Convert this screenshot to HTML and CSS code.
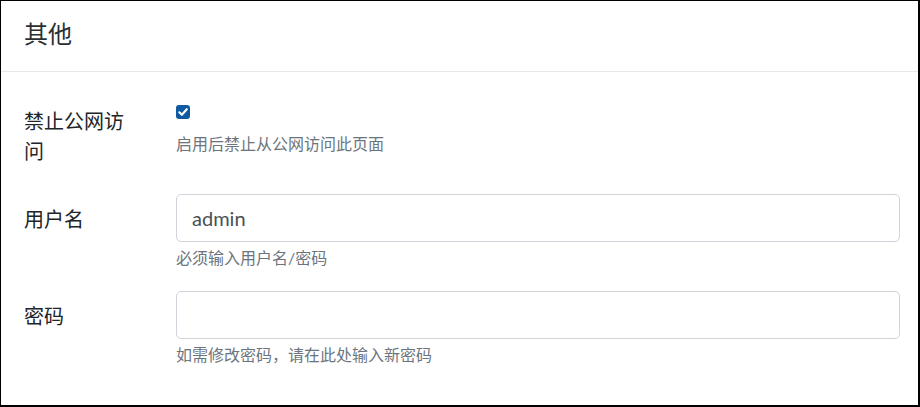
FILE: index.html
```html
<!DOCTYPE html>
<html lang="zh-CN">
<head>
<meta charset="utf-8">
<title>其他</title>
<link rel="stylesheet" href="styles.css">
</head>
<body>
<div class="card">
  <div class="card-header">
    <h5 class="card-title">其他</h5>
  </div>
  <div class="card-body">
    <div class="form-row">
      <label class="form-label" for="deny">禁止公网访问</label>
      <div class="form-control-col form-control-col-check">
        <span class="check" id="deny">
          <svg width="14" height="14" viewBox="0 0 14 14" aria-hidden="true">
            <rect x="0" y="0" width="14" height="14" rx="3" ry="3" fill="#0f5aa0"/>
            <path d="M3.3 7.3 L5.9 9.8 L10.8 4.2" fill="none" stroke="#fff" stroke-width="2.1" stroke-linecap="round" stroke-linejoin="round"/>
          </svg>
        </span>
        <div class="form-text form-text-check">启用后禁止从公网访问此页面</div>
      </div>
    </div>
    <div class="form-row form-row-wide">
      <label class="form-label" for="user">用户名</label>
      <div class="form-control-col">
        <input class="form-input" id="user" type="text" value="admin">
        <div class="form-text">必须输入用户名/密码</div>
      </div>
    </div>
    <div class="form-row">
      <label class="form-label" for="pass">密码</label>
      <div class="form-control-col">
        <input class="form-input" id="pass" type="password" value="">
        <div class="form-text">如需修改密码，请在此处输入新密码</div>
      </div>
    </div>
  </div>
</div>
</body>
</html>
```
FILE: styles.css
```css
* { box-sizing: border-box; }

html, body {
  margin: 0;
  padding: 0;
  background: #fff;
}

body {
  font-family: Lato, "Noto Sans CJK SC", sans-serif;
  color: #212529;
}

.card {
  width: 920px;
  height: 407px;
  border-style: solid;
  border-color: #000;
  border-width: 1px 2px 2px 1px;
  background: #fff;
}

.card-header {
  height: 71px;
  padding: 19px 23px 0;
  border-bottom: 1px solid #e6e8ea;
}

.card-title {
  margin: 0;
  font-size: 24px;
  font-weight: 400;
  line-height: 1.2;
  color: #2b2f33;
}

.card-body {
  padding: 24px 18px 19px 23px;
}

.form-row {
  display: grid;
  grid-template-columns: 152px 1fr;
  margin-bottom: 20px;
}

.form-row-wide {
  margin-bottom: 21px;
}

.form-label {
  padding: 10px 40px 8px 0;
  font-size: 20px;
  line-height: 30px;
  color: #212529;
}

.form-control-col-check {
  padding-top: 9px;
}

.check {
  display: block;
  width: 14px;
  height: 14px;
}

.check svg {
  display: block;
}

.form-input {
  display: block;
  width: 100%;
  height: 48px;
  padding: 8px 15px;
  font-family: Lato, "Noto Sans CJK SC", sans-serif;
  font-size: 20px;
  line-height: 30px;
  color: #495057;
  background: #fff;
  border: 1px solid #ced4da;
  border-radius: 5px;
  outline: none;
}

.form-text {
  margin-top: 4px;
  font-size: 16px;
  line-height: 24px;
  color: #6c757d;
}

.form-text-check {
  margin-top: 13px;
}
```
